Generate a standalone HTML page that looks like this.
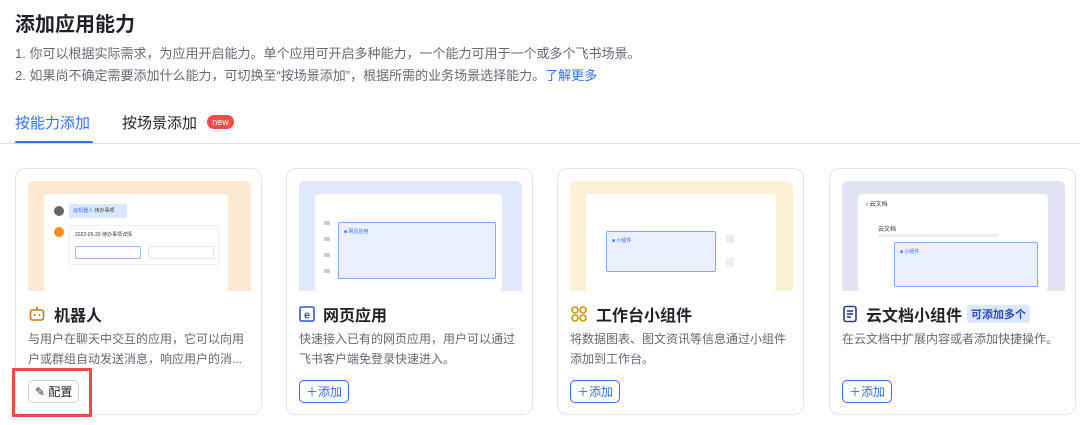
<!DOCTYPE html>
<html><head><meta charset="utf-8"><style>
*{box-sizing:border-box;margin:0;padding:0}
body{width:1080px;height:425px;background:#fff;font-family:"Liberation Sans","Noto Sans CJK SC",sans-serif;position:relative;overflow:hidden;color:#1f2329}
.abs{position:absolute}
h1{position:absolute;left:15px;top:8px;font-size:20px;font-weight:bold;color:#1f2329}
.p{position:absolute;left:15px;font-size:13px;color:#646a73}
.card{position:absolute;top:168px;width:247px;height:247px;border:1px solid #e3e5e8;border-radius:10px;background:#fff}
.img{position:absolute;left:12px;top:12px;width:223px;height:110px;border-radius:6px 6px 0 0;overflow:hidden}
.title{position:absolute;left:12px;top:133px;font-size:16px;font-weight:bold;display:flex;align-items:center;gap:8px;color:#1f2329}
.desc{position:absolute;left:12px;top:160px;width:225px;font-size:12px;line-height:20px;color:#646a73}
.btn{position:absolute;left:12px;top:211px;height:23px;border:1px solid #3370ff;border-radius:5px;color:#3370ff;font-size:12px;padding:0 6px;display:flex;align-items:center;gap:2px}
.win{position:absolute;background:#fff;border-radius:4px}
</style></head><body>
<h1>添加应用能力</h1>
<div class="p" style="top:43px">1. 你可以根据实际需求，为应用开启能力。单个应用可开启多种能力，一个能力可用于一个或多个飞书场景。</div>
<div class="p" style="top:65px">2. 如果尚不确定需要添加什么能力，可切换至“按场景添加”，根据所需的业务场景选择能力。<span style="color:#3370ff">了解更多</span></div>
<div class="abs" style="left:15px;top:112px;font-size:15px;color:#3370ff">按能力添加</div>
<div class="abs" style="left:15px;top:141px;width:78px;height:3px;background:#3370ff;border-radius:2px"></div>
<div class="abs" style="left:0;top:143px;width:1080px;height:1px;background:#dee0e3"></div>
<div class="abs" style="left:122px;top:112px;font-size:15px;color:#1f2329">按场景添加</div>
<div class="abs" style="left:207px;top:115px;width:27px;height:14px;background:#f54a45;border-radius:7px;color:#fff;font-size:9px;line-height:14px;text-align:center">new</div>

<div class="card" style="left:15px">
 <div class="img" style="background:#fde8d2">
  <div class="win" style="left:16px;top:13px;width:184px;height:97px">
   <div class="abs" style="left:10px;top:12px;width:10px;height:10px;border-radius:50%;background:#666"></div>
   <div class="abs" style="left:25px;top:10px;width:58px;height:14px;background:#dbe7ff;border-radius:2px;font-size:5px;line-height:14px;padding-left:4px;color:#3370ff">@机器人 <span style="color:#333">待办事项</span></div>
   <div class="abs" style="left:10px;top:33px;width:10px;height:10px;border-radius:50%;background:#ff8a1f"></div>
   <div class="abs" style="left:25px;top:31px;width:150px;height:40px;border:1px solid #eee;border-radius:2px;font-size:5px;padding:5px;color:#333">2022-05-20 待办事项详情</div>
   <div class="abs" style="left:31px;top:52px;width:66px;height:13px;border:1px solid #9db8f5;border-radius:2px"></div>
   <div class="abs" style="left:104px;top:52px;width:66px;height:13px;border:1px solid #e5e5e5;border-radius:2px"></div>
  </div>
 </div>
 <div class="title"><svg width="18" height="18" viewBox="0 0 18 18"><rect x="2.5" y="5" width="13" height="10" rx="2" fill="none" stroke="#c97a0e" stroke-width="1.6"/><line x1="9" y1="2" x2="9" y2="5" stroke="#c97a0e" stroke-width="1.6"/><circle cx="6.5" cy="10" r="1" fill="#c97a0e"/><circle cx="11.5" cy="10" r="1" fill="#c97a0e"/></svg>机器人</div>
 <div class="desc">与用户在聊天中交互的应用，它可以向用户或群组自动发送消息，响应用户的消...</div>
 <div class="btn" style="border-color:#d0d3d6;color:#1f2329;left:12px">✎ 配置</div>
</div>

<div class="card" style="left:286px">
 <div class="img" style="background:#e1e9fc">
  <div class="win" style="left:16px;top:13px;width:187px;height:97px">
   <div class="abs" style="left:9px;top:27px;width:6px;height:60px;background:repeating-linear-gradient(#ccc 0 4px,transparent 4px 16px)"></div>
   <div class="abs" style="left:23px;top:28px;width:158px;height:57px;background:#eaf0fd;border:1px solid #86a8f5;border-radius:2px;font-size:5px;color:#3370ff;padding:5px">■ 网页应用</div>
  </div>
 </div>
 <div class="title"><svg width="16" height="16" viewBox="0 0 16 16"><rect x="1" y="1" width="14" height="14" rx="1.5" fill="none" stroke="#2a5bd7" stroke-width="1.6"/><text x="8" y="12.5" font-size="11" font-family="Liberation Sans" text-anchor="middle" fill="#2a5bd7" font-weight="bold">e</text></svg>网页应用</div>
 <div class="desc">快速接入已有的网页应用，用户可以通过飞书客户端免登录快速进入。</div>
 <div class="btn">＋添加</div>
</div>

<div class="card" style="left:557px">
 <div class="img" style="background:#fbf2d5">
  <div class="win" style="left:16px;top:13px;width:190px;height:97px">
   <div class="abs" style="left:20px;top:37px;width:110px;height:41px;background:#eaf0fd;border:1px solid #86a8f5;border-radius:2px;font-size:5px;color:#3370ff;padding:5px">■ 小组件</div>
   <div class="abs" style="left:140px;top:41px;width:8px;height:8px;background:#eee"></div>
   <div class="abs" style="left:140px;top:64px;width:8px;height:8px;background:#eee"></div>
  </div>
 </div>
 <div class="title"><svg width="18" height="18" viewBox="0 0 18 18" fill="none" stroke="#c9960e" stroke-width="1.6"><circle cx="5" cy="5" r="3"/><circle cx="13" cy="5" r="3"/><circle cx="5" cy="13" r="3"/><circle cx="13" cy="13" r="3"/></svg>工作台小组件</div>
 <div class="desc">将数据图表、图文资讯等信息通过小组件添加到工作台。</div>
 <div class="btn">＋添加</div>
</div>

<div class="card" style="left:829px">
 <div class="img" style="background:#e3e3f6">
  <div class="win" style="left:16px;top:13px;width:190px;height:97px">
   <div class="abs" style="left:8px;top:5px;font-size:6px;color:#333">‹ 云文档</div>
   <div class="abs" style="left:20px;top:30px;font-size:6px;color:#333">云文档</div>
   <div class="abs" style="left:20px;top:40px;width:120px;height:3px;background:#eee"></div>
   <div class="abs" style="left:36px;top:48px;width:144px;height:45px;background:#eaf0fd;border:1px solid #86a8f5;border-radius:2px;font-size:5px;color:#3370ff;padding:5px">■ 小组件</div>
  </div>
 </div>
 <div class="title"><svg width="16" height="18" viewBox="0 0 16 18" fill="none" stroke="#2b3a8f" stroke-width="1.6"><rect x="2" y="1.5" width="12" height="15" rx="2"/><line x1="5" y1="6" x2="11" y2="6"/><line x1="5" y1="9" x2="11" y2="9"/><line x1="5" y1="12" x2="9" y2="12"/></svg>云文档小组件<span style="font-size:11px;background:#dde6fd;color:#2b4eb8;padding:1px 4px;border-radius:3px;font-weight:bold;margin-left:-3px">可添加多个</span></div>
 <div class="desc">在云文档中扩展内容或者添加快捷操作。</div>
 <div class="btn">＋添加</div>
</div>

<div class="abs" style="left:12px;top:368px;width:80px;height:49px;border:3px solid #ea4b4b"></div>
</body></html>
